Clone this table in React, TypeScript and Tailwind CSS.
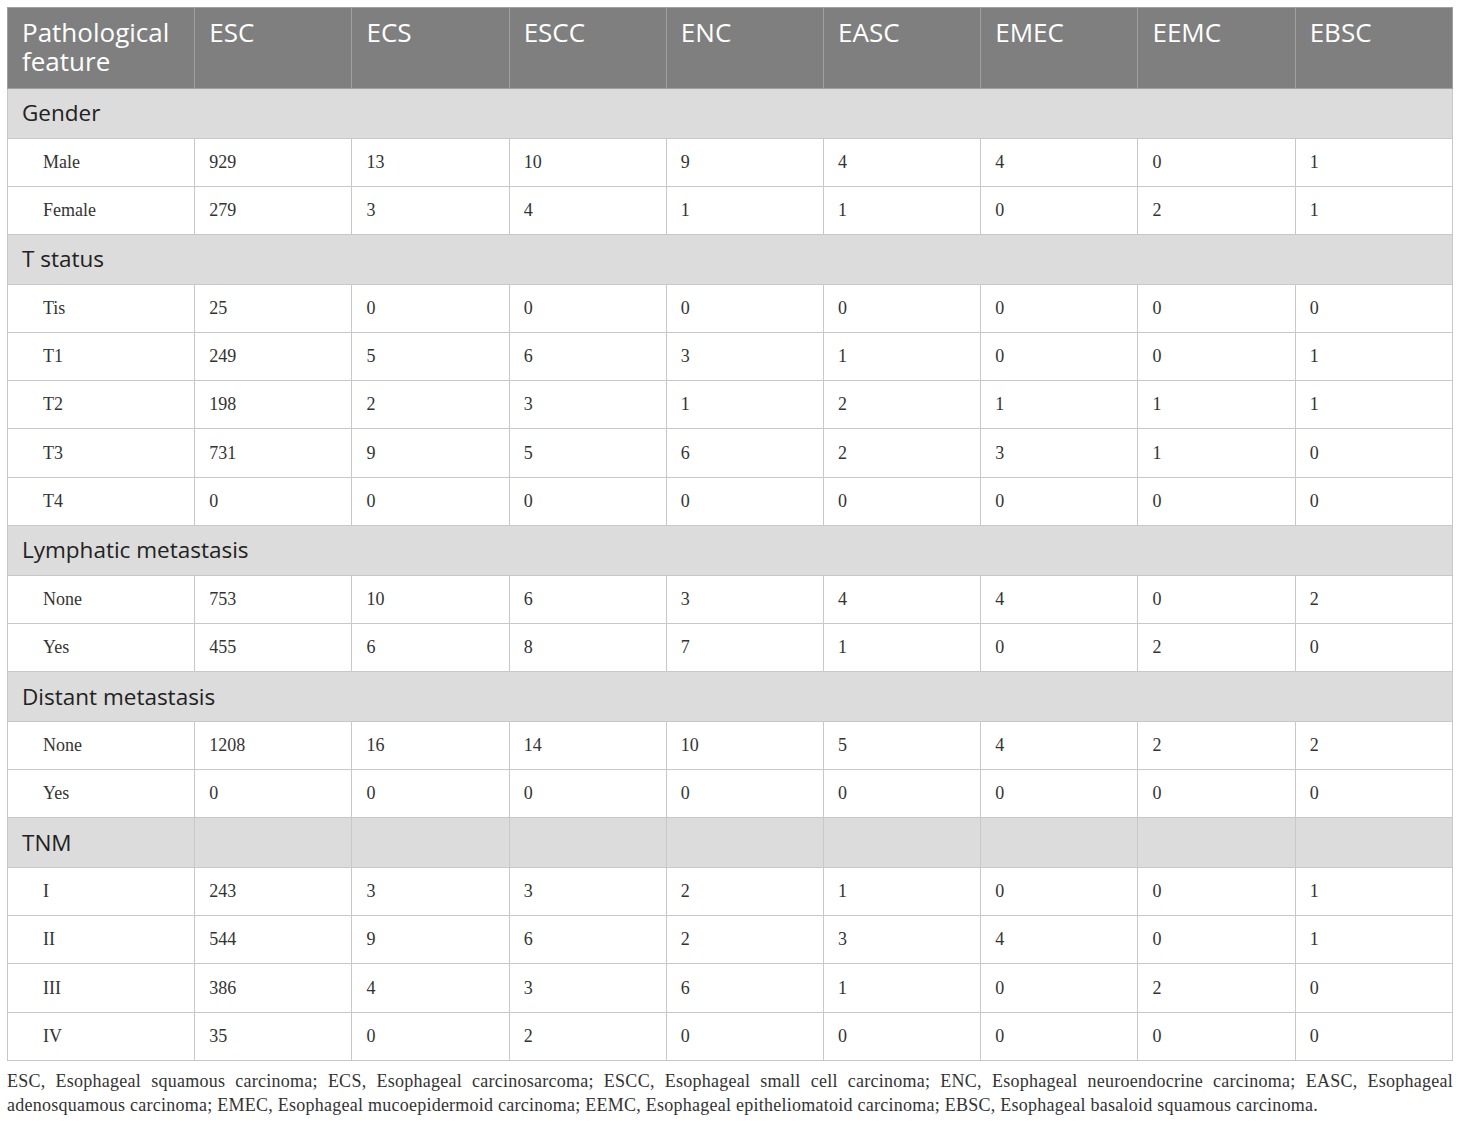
import React from "react";

const cols = ["ESC", "ECS", "ESCC", "ENC", "EASC", "EMEC", "EEMC", "EBSC"];

type Row = { kind: "section"; label: string; split?: boolean } | { kind: "data"; label: string; values: string[] };

const rows: Row[] = [
  { kind: "section", label: "Gender" },
  { kind: "data", label: "Male", values: ["929", "13", "10", "9", "4", "4", "0", "1"] },
  { kind: "data", label: "Female", values: ["279", "3", "4", "1", "1", "0", "2", "1"] },
  { kind: "section", label: "T status" },
  { kind: "data", label: "Tis", values: ["25", "0", "0", "0", "0", "0", "0", "0"] },
  { kind: "data", label: "T1", values: ["249", "5", "6", "3", "1", "0", "0", "1"] },
  { kind: "data", label: "T2", values: ["198", "2", "3", "1", "2", "1", "1", "1"] },
  { kind: "data", label: "T3", values: ["731", "9", "5", "6", "2", "3", "1", "0"] },
  { kind: "data", label: "T4", values: ["0", "0", "0", "0", "0", "0", "0", "0"] },
  { kind: "section", label: "Lymphatic metastasis" },
  { kind: "data", label: "None", values: ["753", "10", "6", "3", "4", "4", "0", "2"] },
  { kind: "data", label: "Yes", values: ["455", "6", "8", "7", "1", "0", "2", "0"] },
  { kind: "section", label: "Distant metastasis" },
  { kind: "data", label: "None", values: ["1208", "16", "14", "10", "5", "4", "2", "2"] },
  { kind: "data", label: "Yes", values: ["0", "0", "0", "0", "0", "0", "0", "0"] },
  { kind: "section", label: "TNM", split: true },
  { kind: "data", label: "I", values: ["243", "3", "3", "2", "1", "0", "0", "1"] },
  { kind: "data", label: "II", values: ["544", "9", "6", "2", "3", "4", "0", "1"] },
  { kind: "data", label: "III", values: ["386", "4", "3", "6", "1", "0", "2", "0"] },
  { kind: "data", label: "IV", values: ["35", "0", "2", "0", "0", "0", "0", "0"] },
];

const sans = { fontFamily: '"Open Sans", "Noto Sans", sans-serif' };
const serif = { fontFamily: '"Liberation Serif", "Times New Roman", serif' };

export default function App() {
  return (
    <div className="bg-white w-[1460px] min-h-[1124px] pt-[7px] px-[7px]">
      <table className="w-[1446px] border-collapse table-fixed border border-[#c8c8c8]">
        <colgroup>
          <col className="w-[187px]" />
          {cols.map((c) => (
            <col key={c} className="w-[157px]" />
          ))}
        </colgroup>
        <thead>
          <tr className="bg-[#7e7f7e] h-[81px]">
            <th
              className="text-left align-top font-normal text-white text-[26px] leading-[29px] pt-[10px] pl-[14px] pr-[4px] border border-[#a0a0a0]"
              style={sans}
            >
              Pathological feature
            </th>
            {cols.map((c) => (
              <th
                key={c}
                className="text-left align-top font-normal text-white text-[26px] leading-[29px] pt-[10px] pl-[14px] border border-[#a0a0a0]"
                style={sans}
              >
                {c}
              </th>
            ))}
          </tr>
        </thead>
        <tbody>
          {rows.map((r, i) =>
            r.kind === "section" ? (
              <tr key={i} className="bg-[#dcdcdc] h-[49.5px]">
                {r.split ? (
                  <>
                    <td
                      className="align-middle pl-[14px] text-[22.5px] text-[#222] border border-[#c8c8c8]"
                      style={sans}
                    >
                      {r.label}
                    </td>
                    {cols.map((c) => (
                      <td key={c} className="border border-[#c8c8c8]" />
                    ))}
                  </>
                ) : (
                  <td
                    colSpan={9}
                    className="align-middle pl-[14px] text-[22.5px] text-[#222] border border-[#c8c8c8]"
                    style={sans}
                  >
                    {r.label}
                  </td>
                )}
              </tr>
            ) : (
              <tr key={i} className="bg-white h-[48.3px]">
                <td
                  className="align-middle pl-[35px] text-[18px] text-[#333] border border-[#c8c8c8]"
                  style={serif}
                >
                  {r.label}
                </td>
                {r.values.map((v, j) => (
                  <td
                    key={j}
                    className="align-middle pl-[14px] text-[18px] text-[#333] border border-[#c8c8c8]"
                    style={serif}
                  >
                    {v}
                  </td>
                ))}
              </tr>
            )
          )}
        </tbody>
      </table>
      <p
        className="mt-[8px] w-[1446px] text-justify text-[18px] leading-[24px] tracking-[0.25px] text-[#333]"
        style={serif}
      >
        ESC, Esophageal squamous carcinoma; ECS, Esophageal carcinosarcoma; ESCC, Esophageal small cell carcinoma; ENC,
        Esophageal neuroendocrine carcinoma; EASC, Esophageal adenosquamous carcinoma; EMEC, Esophageal mucoepidermoid
        carcinoma; EEMC, Esophageal epitheliomatoid carcinoma; EBSC, Esophageal basaloid squamous carcinoma.
      </p>
    </div>
  );
}
